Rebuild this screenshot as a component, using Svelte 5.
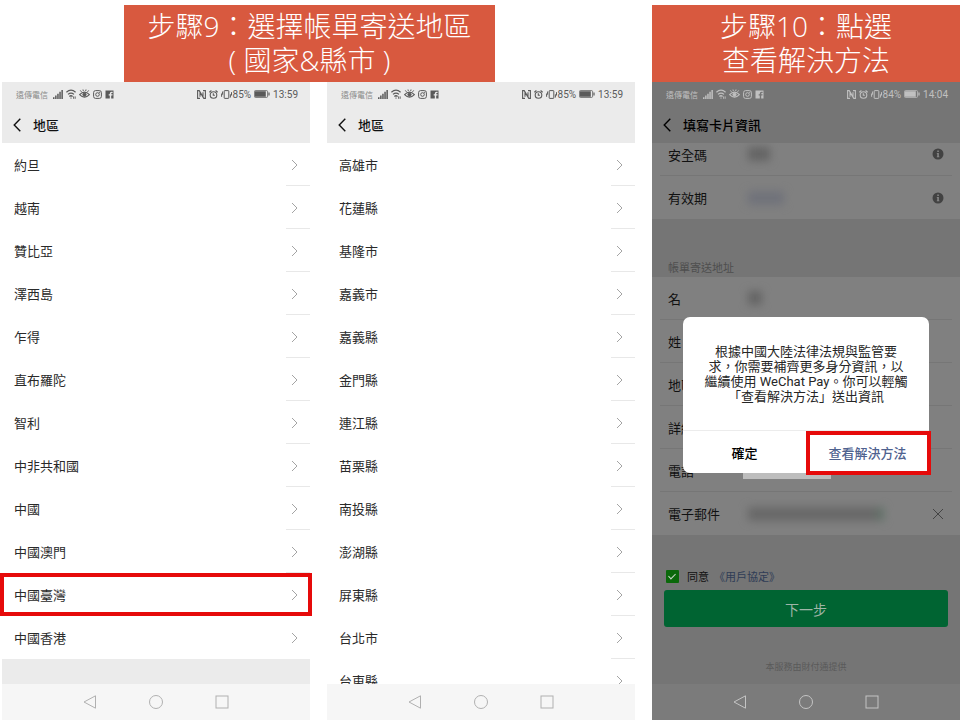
<script lang="ts">
  type Field = {
    id: string;
    label: string;
    mask: string;
    action?: 'info' | 'clear';
  };

  const countries = [
    '約旦',
    '越南',
    '贊比亞',
    '澤西島',
    '乍得',
    '直布羅陀',
    '智利',
    '中非共和國',
    '中國',
    '中國澳門',
    '中國臺灣',
    '中國香港'
  ];

  const cities = [
    '高雄市',
    '花蓮縣',
    '基隆市',
    '嘉義市',
    '嘉義縣',
    '金門縣',
    '連江縣',
    '苗栗縣',
    '南投縣',
    '澎湖縣',
    '屏東縣',
    '台北市',
    '台東縣'
  ];

  const cardFields: Field[] = [
    { id: 'cvv', label: '安全碼', mask: 'short', action: 'info' },
    { id: 'expiry', label: '有效期', mask: 'medium', action: 'info' }
  ];

  const addressFields: Field[] = [
    { id: 'given', label: '名', mask: 'tiny' },
    { id: 'family', label: '姓', mask: '' },
    { id: 'region', label: '地區', mask: '' },
    { id: 'street', label: '詳細地址', mask: '' },
    { id: 'phone', label: '電話', mask: 'block' },
    { id: 'email', label: '電子郵件', mask: 'long', action: 'clear' }
  ];

  let selected = $state('中國臺灣');
  let agreed = $state(true);
</script>

{#snippet statusBar(battery: string, time: string)}
  <div class="status">
    <span class="carrier">遠傳電信</span>
    <svg width="10" height="10" viewBox="0 0 10 10" fill="currentColor">
      <path d="M0 8.200h1.500V10H0zM2.100 6.600h1.500V10H2.100zM4.200 4.800h1.500V10H4.200zM6.300 2.800h1.500V10H6.300zM8.400 1h1.500v9H8.400z" />
    </svg>
    <svg width="10" height="10" viewBox="0 0 10 10" fill="none" stroke="currentColor" stroke-width="1.2">
      <path d="M.4 3.200Q5-.8 9.600 3.200M2 5.400Q5 2.800 8 5.400M3.400 7.500Q5 6 6.600 7.500" />
      <path d="M5 8.400v1.400M7.600 7.400v2.400M9.200 9.800V7.400" stroke-width=".9" />
    </svg>
    <svg width="11" height="10" viewBox="0 0 11 10" fill="none" stroke="currentColor">
      <path d="M.6 5.600Q5.500.6 10.400 5.600Q5.500 10.600.6 5.600z" stroke-width="1.1" />
      <circle cx="5.500" cy="5.600" r="1.600" fill="currentColor" />
      <path d="M1.300 1.400l1.200 1.500M9.700 1.400 8.500 2.900M4 .5l.3 1.500M7 .5l-.3 1.500" />
    </svg>
    <svg width="9" height="9" viewBox="0 0 9 9" fill="none" stroke="currentColor">
      <rect x=".6" y=".6" width="7.800" height="7.800" rx="2" />
      <circle cx="4.500" cy="4.500" r="1.800" />
      <circle cx="6.700" cy="2.300" r=".3" />
    </svg>
    <svg width="9" height="9" viewBox="0 0 9 9" fill="currentColor">
      <path d="M.5.5h8v8H6.200V5.600h1.200l.2-1.300H6.200v-.7q0-.7.7-.7h.7V1.700H6.500Q4.800 1.700 4.800 3.400v.9H3.700v1.300h1.100v2.900H.5z" />
    </svg>
    <span class="spacer"></span>
    <svg width="9" height="9" viewBox="0 0 9 9" fill="none" stroke="currentColor" stroke-width="1.1">
      <path d="M3 8.400H.6V.6h1.600L6 6.800V2.200M6 .6h2.400v7.800H6.800L3 2.200v4.600" />
    </svg>
    <svg width="9" height="9" viewBox="0 0 9 9" fill="none" stroke="currentColor" stroke-width="1.1">
      <circle cx="4.500" cy="5" r="3.300" />
      <path d="M.3 2.200 2.400.5M8.700 2.200 6.600.5M4.300 3.200v2h1.600" />
    </svg>
    <svg class="vibrate" width="11" height="9" viewBox="0 0 11 9" fill="none" stroke="currentColor">
      <rect x="3.200" y=".6" width="4.600" height="7.800" rx=".5" />
      <path d="M1.600 1.500v3.200M9.400 4.300v3.200M.6 3.500v3.300M10.500 2.200v3.300" />
    </svg>
    <span class="battery-text">{battery}</span>
    <svg width="16" height="8" viewBox="0 0 16 8">
      <rect x=".4" y=".6" width="13.200" height="6.800" rx="1" fill="none" stroke="currentColor" stroke-width=".8" />
      <path d="M1 1.200h10.800v5.600H1zM14.400 2.500h1.200v3h-1.200z" fill="currentColor" />
    </svg>
    <span class="time">{time}</span>
  </div>
{/snippet}

{#snippet titleBar(title: string)}
  <header class="title-bar">
    <button class="icon-btn" aria-label="返回">
      <svg width="8" height="14" viewBox="0 0 8 14" fill="none" stroke="currentColor" stroke-width="1.4">
        <path d="M7.300.7 1.200 7l6.100 6.300" />
      </svg>
    </button>
    <h2>{title}</h2>
  </header>
{/snippet}

{#snippet navBar()}
  <nav class="nav-bar">
    <button class="icon-btn" aria-label="上一頁">
      <svg width="14" height="14" viewBox="0 0 14 14" fill="none" stroke="currentColor" stroke-linejoin="round">
        <path d="M12.500.8v12.400L1 7z" />
      </svg>
    </button>
    <button class="icon-btn" aria-label="主畫面">
      <svg width="14" height="14" viewBox="0 0 14 14" fill="none" stroke="currentColor">
        <circle cx="7" cy="7" r="6.500" />
      </svg>
    </button>
    <button class="icon-btn" aria-label="最近">
      <svg width="14" height="14" viewBox="0 0 14 14" fill="none" stroke="currentColor">
        <rect x="1" y="1" width="12" height="12" />
      </svg>
    </button>
  </nav>
{/snippet}

{#snippet regionList(names: string[])}
  <ul class="regions">
    {#each names as name}
      <li>
        <button class="region" class:marked={selected === name} onclick={() => (selected = name)}>
          {name}
          <svg width="7" height="12" viewBox="0 0 7 12" fill="none" stroke="currentColor">
            <path d="M1 1l5 5-5 5" />
          </svg>
        </button>
      </li>
    {/each}
  </ul>
{/snippet}

{#snippet fieldRow(field: Field)}
  <div class="field">
    <span class="field-label">{field.label}</span>
    {#if field.mask}
      <span class="mask {field.mask}"></span>
    {/if}
    {#if field.action === 'info'}
      <button class="icon-btn action" aria-label="說明">
        <svg width="12" height="12" viewBox="0 0 12 12">
          <circle cx="6" cy="6" r="5.500" fill="#424242" />
          <path d="M5.300 2.600h1.500v1.500H5.300zM4.800 5h2v3.400h.6v.8H4.800v-.8h.5V5.800h-.5z" fill="#8a8a8a" />
        </svg>
      </button>
    {:else if field.action === 'clear'}
      <button class="icon-btn action" aria-label="清除">
        <svg width="12" height="12" viewBox="0 0 12 12" fill="none" stroke="#444">
          <path d="M1 1l10 10M11 1 1 11" />
        </svg>
      </button>
    {/if}
  </div>
{/snippet}

<main>
  <h1 class="banner wide">步驟9：選擇帳單寄送地區<br />( 國家&amp;縣市 )</h1>
  <h1 class="banner">步驟10：點選<br />查看解決方法</h1>

  <section class="phone">
    {@render statusBar('85%', '13:59')}
    {@render titleBar('地區')}
    {@render regionList(countries)}
    {@render navBar()}
  </section>

  <section class="phone">
    {@render statusBar('85%', '13:59')}
    {@render titleBar('地區')}
    {@render regionList(cities)}
    {@render navBar()}
  </section>

  <section class="phone dimmed">
    {@render statusBar('84%', '14:04')}
    {@render titleBar('填寫卡片資訊')}
    <div class="form">
      <div class="group scrolled">
        {#each cardFields as field (field.id)}
          {@render fieldRow(field)}
        {/each}
      </div>
      <h3>帳單寄送地址</h3>
      <div class="group">
        {#each addressFields as field (field.id)}
          {@render fieldRow(field)}
        {/each}
      </div>
      <div class="agree">
        <input id="agree" type="checkbox" bind:checked={agreed} />
        <label for="agree">同意</label>
        <a href="#terms">《用戶協定》</a>
      </div>
      <button class="next" disabled={!agreed}>下一步</button>
      <p class="provider">本服務由財付通提供</p>
    </div>
    {@render navBar()}

    <div class="overlay">
      <div class="dialog" role="dialog" aria-modal="true" aria-labelledby="dialog-text">
        <p id="dialog-text">
          根據中國大陸法律法規與監管要<br />求，你需要補齊更多身分資訊，以<br />繼續使用 WeChat Pay。你可以輕觸<br />「查看解決方法」送出資訊
        </p>
        <div class="dialog-actions">
          <button>確定</button>
          <button class="solution marked">查看解決方法</button>
        </div>
      </div>
    </div>
  </section>
</main>

<style>
  :global(body) {
    background: #fff;
  }

  main {
    display: grid;
    grid-template-columns: repeat(3, minmax(0, 1fr));
    grid-template-rows: auto minmax(0, 1fr);
    column-gap: 17px;
    box-sizing: border-box;
    height: 100vh;
    padding: 5px 0 0 2px;
    font-family: Roboto, 'Noto Sans CJK TC', sans-serif;
  }

  button {
    padding: 0;
    border: none;
    background: none;
    color: inherit;
    font: inherit;
    cursor: pointer;
  }

  svg {
    display: block;
    flex: none;
  }

  .banner {
    margin: 0;
    padding: 4px 24px 5px;
    background: #d8593f;
    color: #fff;
    font-family: 'Open Sans', 'Noto Sans CJK TC', sans-serif;
    font-size: 28px;
    font-weight: 300;
    line-height: 34px;
    text-align: center;
    white-space: nowrap;
  }

  .banner.wide {
    grid-column: span 2;
    justify-self: center;
    margin-right: 18px;
  }

  .phone {
    position: relative;
    display: flex;
    flex-direction: column;
    background: #ebebeb;
    color: #2a2a2a;
  }

  .status {
    display: flex;
    flex: none;
    align-items: center;
    gap: 3px;
    height: 24px;
    padding: 0 12px 0 14px;
    color: #5a5a5a;
    font-size: 10px;
  }

  .carrier {
    margin-right: 2px;
    color: #8a8a8a;
    font-size: 8px;
  }

  .spacer {
    flex: 1;
  }

  .vibrate {
    margin-right: -2px;
  }

  .title-bar {
    position: relative;
    z-index: 1;
    display: flex;
    flex: none;
    align-items: center;
    gap: 12px;
    height: 37px;
    padding: 0 11px;
    background: #ebebeb;
    color: #111;
  }

  h2 {
    margin: 0;
    font-size: 13px;
    font-weight: 500;
  }

  .regions {
    flex: 1;
    min-height: 0;
    margin: 0;
    padding: 0;
    overflow-y: clip;
    list-style: none;
  }

  .region {
    position: relative;
    display: flex;
    align-items: center;
    justify-content: space-between;
    width: 100%;
    height: 43px;
    padding: 0 12px;
    background: linear-gradient(#e8e8e8, #e8e8e8) right bottom / 24px 1px no-repeat #fff;
    font-size: 13px;
    text-align: left;
  }

  li:last-child .region {
    background: #fff;
  }

  .region svg {
    color: #a4a4a4;
  }

  .marked::after {
    content: '';
    position: absolute;
    z-index: 1;
    inset: 0 -2px;
    border: 4px solid #e60a0a;
  }

  .nav-bar {
    display: flex;
    flex: none;
    align-items: center;
    justify-content: center;
    gap: 52px;
    height: 36px;
    background: #f6f6f6;
    color: #b0b0b0;
  }

  .dimmed {
    background: #757575;
    color: #111;
  }

  .dimmed .status,
  .dimmed .carrier {
    color: #c0c0c0;
  }

  .dimmed .title-bar {
    background: #757575;
    color: #000;
  }

  .dimmed .nav-bar {
    background: #7b7b7b;
    color: #c4c4c4;
  }

  .form {
    display: flex;
    flex: 1;
    flex-direction: column;
    min-height: 0;
  }

  .form > * {
    flex: none;
  }

  .group {
    padding: 0 8px;
    background: #808080;
  }

  .scrolled {
    margin-top: -10px;
  }

  .field {
    display: flex;
    align-items: center;
    box-sizing: border-box;
    height: 43px;
    padding: 0 8px;
    border-bottom: 1px solid #767676;
    font-size: 13px;
  }

  .field:last-child {
    border-bottom: none;
  }

  .field-label {
    width: 80px;
    white-space: nowrap;
  }

  .action {
    margin-left: auto;
  }

  .mask {
    height: 14px;
    background: #646464;
    filter: blur(4px);
  }

  .mask.tiny {
    width: 14px;
  }

  .mask.short {
    width: 22px;
  }

  .mask.medium {
    width: 36px;
    background: #70727a;
  }

  .mask.long {
    width: 136px;
    background: linear-gradient(90deg, #686868 92%, #5f7568);
  }

  .mask.block {
    width: 88px;
    height: 17px;
    margin-left: -5px;
    background: #bdbdbd;
    filter: none;
  }

  h3 {
    display: flex;
    align-items: flex-end;
    box-sizing: border-box;
    height: 58px;
    margin: 0;
    padding: 0 16px;
    color: #4e4e4e;
    font-size: 11px;
    font-weight: 400;
    line-height: 16px;
  }

  .agree {
    display: flex;
    align-items: center;
    height: 14px;
    padding: 34px 14px 7px;
    font-size: 11px;
  }

  .agree input {
    position: relative;
    width: 13px;
    height: 13px;
    margin: 0 8px 0 0;
    border-radius: 1px;
    background: #0a680a;
    appearance: none;
  }

  .agree input:checked::after {
    content: '';
    position: absolute;
    top: 2px;
    left: 4px;
    width: 3px;
    height: 6px;
    border: solid #c8d8c8;
    border-width: 0 1px 1px 0;
    transform: rotate(45deg);
  }

  .agree a {
    margin-left: 5px;
    color: #2f3c55;
    text-decoration: none;
  }

  .next {
    height: 37px;
    margin: 0 12px;
    border-radius: 3px;
    background: #006432;
    color: #9fb5a8;
    font-size: 14px;
  }

  .provider {
    margin: 34px 0 0;
    color: #5a5a5a;
    font-size: 9px;
    line-height: 12px;
    text-align: center;
  }

  .overlay {
    position: absolute;
    z-index: 2;
    inset: 0;
    display: flex;
    align-items: center;
    justify-content: center;
    padding-bottom: 12px;
  }

  .dialog {
    width: 80%;
    border-radius: 7px;
    background: #fff;
  }

  .dialog p {
    margin: 0;
    padding: 27px 0 26px;
    color: #262626;
    font-size: 13px;
    line-height: 15px;
    text-align: center;
    white-space: nowrap;
  }

  .dialog-actions {
    display: grid;
    grid-template-columns: 1fr 1fr;
    border-top: 1px solid #ececec;
  }

  .dialog-actions button {
    position: relative;
    height: 42px;
    color: #000;
    font-size: 13px;
    font-weight: 500;
  }

  .dialog-actions .solution {
    color: #4f628f;
  }

  .solution.marked::after {
    inset: 0 -2px -2px 0;
  }
</style>
